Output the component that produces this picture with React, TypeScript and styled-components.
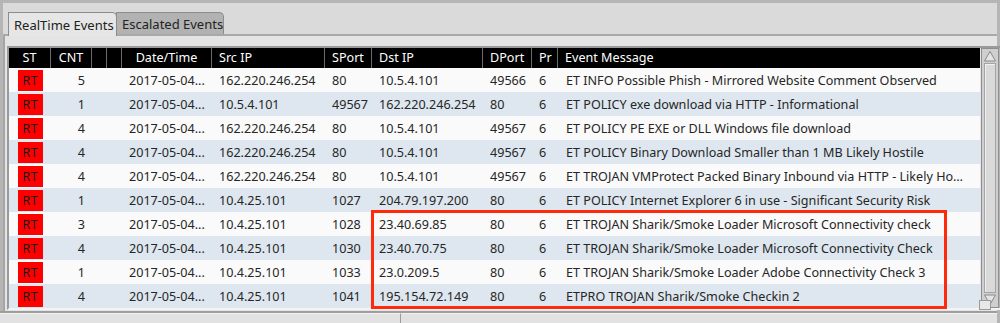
import React from 'react'
import styled, { createGlobalStyle } from 'styled-components'

const GlobalStyle = createGlobalStyle`
  html, body { margin: 0; padding: 0; }
  body {
    font-family: "Noto Sans", "Open Sans", sans-serif;
    font-size: 12.6px;
    color: #222;
    background: #b5b5b5;
  }
`

const cols = '42px 41px 14px 16px 90px 113px 47px 111px 49px 26px 1fr'

type Ev = {
  cnt: number
  src: string
  sport: string
  dst: string
  dport: string
  msg: string
}

const events: Ev[] = [
  { cnt: 5, src: '162.220.246.254', sport: '80', dst: '10.5.4.101', dport: '49566', msg: 'ET INFO Possible Phish - Mirrored Website Comment Observed' },
  { cnt: 1, src: '10.5.4.101', sport: '49567', dst: '162.220.246.254', dport: '80', msg: 'ET POLICY exe download via HTTP - Informational' },
  { cnt: 4, src: '162.220.246.254', sport: '80', dst: '10.5.4.101', dport: '49567', msg: 'ET POLICY PE EXE or DLL Windows file download' },
  { cnt: 4, src: '162.220.246.254', sport: '80', dst: '10.5.4.101', dport: '49567', msg: 'ET POLICY Binary Download Smaller than 1 MB Likely Hostile' },
  { cnt: 4, src: '162.220.246.254', sport: '80', dst: '10.5.4.101', dport: '49567', msg: 'ET TROJAN VMProtect Packed Binary Inbound via HTTP - Likely Hostile' },
  { cnt: 1, src: '10.4.25.101', sport: '1027', dst: '204.79.197.200', dport: '80', msg: 'ET POLICY Internet Explorer 6 in use - Significant Security Risk' },
  { cnt: 3, src: '10.4.25.101', sport: '1028', dst: '23.40.69.85', dport: '80', msg: 'ET TROJAN Sharik/Smoke Loader Microsoft Connectivity check' },
  { cnt: 4, src: '10.4.25.101', sport: '1030', dst: '23.40.70.75', dport: '80', msg: 'ET TROJAN Sharik/Smoke Loader Microsoft Connectivity Check' },
  { cnt: 1, src: '10.4.25.101', sport: '1033', dst: '23.0.209.5', dport: '80', msg: 'ET TROJAN Sharik/Smoke Loader Adobe Connectivity Check 3' },
  { cnt: 4, src: '10.4.25.101', sport: '1041', dst: '195.154.72.149', dport: '80', msg: 'ETPRO TROJAN Sharik/Smoke Checkin 2' },
]

export default function App() {
  return (
    <>
      <GlobalStyle />
      <Window>
        <TabBar>
          <Tab $active>RealTime Events</Tab>
          <Tab>Escalated Events</Tab>
        </TabBar>
        <Panel>
          <Frame>
            <Table>
              <HeaderRow>
                <HeadCell $align="center">ST</HeadCell>
                <HeadCell $align="center">CNT</HeadCell>
                <HeadCell />
                <HeadCell />
                <HeadCell $align="center">Date/Time</HeadCell>
                <HeadCell>Src IP</HeadCell>
                <HeadCell>SPort</HeadCell>
                <HeadCell>Dst IP</HeadCell>
                <HeadCell>DPort</HeadCell>
                <HeadCell>Pr</HeadCell>
                <HeadCell $last>Event Message</HeadCell>
              </HeaderRow>
              <Body>
                {events.map((e, i) => (
                  <Row key={i} $alt={i % 2 === 1}>
                    <Cell $align="center"><Badge>RT</Badge></Cell>
                    <Cell $align="right">{e.cnt}</Cell>
                    <Cell />
                    <Cell />
                    <Cell>2017-05-04...</Cell>
                    <Cell>{e.src}</Cell>
                    <Cell>{e.sport}</Cell>
                    <Cell>{e.dst}</Cell>
                    <Cell>{e.dport}</Cell>
                    <Cell>6</Cell>
                    <Cell $ellipsis>{e.msg}</Cell>
                  </Row>
                ))}
                <Highlight />
              </Body>
            </Table>
            <ScrollBar>
              <Arrow>
                <svg width="14" height="12" viewBox="0 0 14 12">
                  <path d="M1.5 11 L7 1.5 L12.5 11 Z" fill="#e4e4e4" stroke="#8a8a8a" strokeWidth="1" />
                </svg>
              </Arrow>
              <Thumb />
              <Arrow>
                <svg width="14" height="12" viewBox="0 0 14 12">
                  <path d="M1.5 1 L7 10.5 L12.5 1 Z" fill="#e4e4e4" stroke="#8a8a8a" strokeWidth="1" />
                </svg>
              </Arrow>
            </ScrollBar>
          </Frame>
          <Grip />
        </Panel>
        <StatusBar>
          <StatusCell $w={400} />
          <StatusCell />
        </StatusBar>
      </Window>
    </>
  )
}

const Window = styled.div`
  width: 1000px;
  height: 323px;
  box-sizing: border-box;
  padding: 3px 3px 0 3px;
  background: #b5b5b5;
  display: flex;
  flex-direction: column;
  overflow: hidden;
`
const TabBar = styled.div`
  height: 31px;
  background: #dadada;
  display: flex;
  align-items: flex-end;
  padding-left: 5px;
  border-bottom: 2px solid #a9a9a9;
`
const Tab = styled.div<{ $active?: boolean }>`
  height: ${p => (p.$active ? 24 : 22)}px;
  margin-bottom: ${p => (p.$active ? -2 : 0)}px;
  box-sizing: border-box;
  padding: 0 0 0 5px;
  display: flex;
  align-items: center;
  white-space: nowrap;
  font-size: 13px;
  color: #222;
  background: ${p => (p.$active ? '#e6e6e6' : '#b2b2b2')};
  border: 1px solid #8c8c8c;
  border-bottom: none;
  border-top-right-radius: 5px;
  position: relative;
  z-index: ${p => (p.$active ? 2 : 1)};
  ${p => (p.$active ? 'width: 109px;' : 'width: 108px; margin-left: -1px;')}
`
const Panel = styled.div`
  flex: 1;
  background: #e4e4e4;
  border-left: 2px solid #a5a5a5;
  padding: 10px 0 0 2px;
  display: flex;
  flex-direction: column;
  position: relative;
`
const Frame = styled.div`
  display: flex;
  border-top: 2px solid #9a9a9a;
  border-left: 2px solid #9a9a9a;
  border-bottom: 2px solid #f4f4f4;
  width: 995px;
  box-sizing: border-box;
`
const Table = styled.div`
  width: 971px;
  display: flex;
  flex-direction: column;
`
const HeaderRow = styled.div`
  display: grid;
  grid-template-columns: ${cols};
  height: 20px;
  background: #000;
`
const HeadCell = styled.div<{ $align?: string; $last?: boolean }>`
  color: #fff;
  line-height: 20px;
  padding: 0 7px;
  text-align: ${p => p.$align || 'left'};
  border-right: ${p => (p.$last ? 'none' : '1px solid #6b6b6b')};
  white-space: nowrap;
  overflow: hidden;
`
const Body = styled.div`
  position: relative;
`
const Row = styled.div<{ $alt: boolean }>`
  display: grid;
  grid-template-columns: ${cols};
  height: 24px;
  align-items: center;
  background: ${p => (p.$alt ? '#dee6ef' : '#fafafa')};
`
const Cell = styled.div<{ $align?: string; $ellipsis?: boolean }>`
  padding: ${p =>
    p.$align === 'right' ? '0 7px 0 0' : p.$align === 'center' ? '0' : p.$ellipsis ? '0 12px 0 8px' : '0 0 0 7px'};
  text-align: ${p => p.$align || 'left'};
  white-space: nowrap;
  overflow: ${p => (p.$ellipsis ? 'hidden' : 'visible')};
  text-overflow: ${p => (p.$ellipsis ? 'ellipsis' : 'clip')};
  color: #262626;
  display: ${p => (p.$align === 'center' ? 'flex' : 'block')};
  justify-content: center;
`
const Badge = styled.span`
  display: inline-flex;
  align-items: center;
  justify-content: center;
  width: 25px;
  height: 21px;
  background: #ff0000;
  color: #1a1a1a;
  font-size: 13px;
`
const Highlight = styled.div`
  position: absolute;
  left: 362px;
  top: 142px;
  width: 576px;
  height: 99px;
  box-sizing: border-box;
  border: 3px solid #ff2a0a;
  pointer-events: none;
`
const ScrollBar = styled.div`
  width: 18px;
  margin-left: 1px;
  background: #cfcfcf;
  border: 1px solid #8e8e8e;
  display: flex;
  flex-direction: column;
  box-sizing: border-box;
`
const Arrow = styled.div`
  height: 14px;
  display: flex;
  align-items: center;
  justify-content: center;
`
const Thumb = styled.div`
  flex: 1;
  margin: 0 2px;
  background: #d9d9d9;
  border: 1px solid #a4a4a4;
  box-shadow: inset 1px 1px 0 #f0f0f0;
`
const Grip = styled.div`
  position: absolute;
  right: 6px;
  bottom: 1px;
  width: 10px;
  height: 8px;
  background: #e8e8e8;
  border: 1px solid #9a9a9a;
`
const StatusBar = styled.div`
  height: 10px;
  display: flex;
  border-top: 2px solid #9d9d9d;
  background: #e2e2e2;
  margin-left: -3px;
`
const StatusCell = styled.div<{ $w?: number }>`
  ${p => (p.$w ? `width: ${p.$w}px; border-right: 1px solid #9d9d9d;` : 'flex: 1;')}
  border-top: 1px solid #f2f2f2;
`
